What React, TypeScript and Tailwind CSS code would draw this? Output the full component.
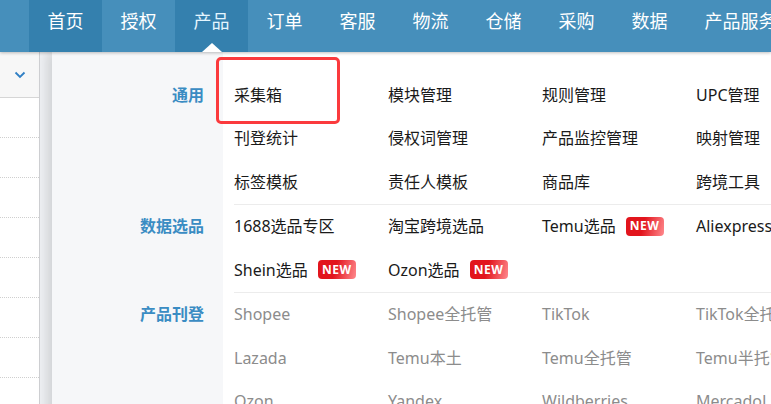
const NAV = ["首页", "授权", "产品", "订单", "客服", "物流", "仓储", "采购", "数据", "产品服务"];

type Item = { label: string; isNew?: boolean };

const SECTIONS: { title: string; muted?: boolean; rows: Item[][] }[] = [
  {
    title: "通用",
    rows: [
      [{ label: "采集箱" }, { label: "模块管理" }, { label: "规则管理" }, { label: "UPC管理" }],
      [{ label: "刊登统计" }, { label: "侵权词管理" }, { label: "产品监控管理" }, { label: "映射管理" }],
      [{ label: "标签模板" }, { label: "责任人模板" }, { label: "商品库" }, { label: "跨境工具" }],
    ],
  },
  {
    title: "数据选品",
    rows: [
      [
        { label: "1688选品专区" },
        { label: "淘宝跨境选品" },
        { label: "Temu选品", isNew: true },
        { label: "Aliexpress选品" },
      ],
      [{ label: "Shein选品", isNew: true }, { label: "Ozon选品", isNew: true }],
    ],
  },
  {
    title: "产品刊登",
    muted: true,
    rows: [
      [{ label: "Shopee" }, { label: "Shopee全托管" }, { label: "TikTok" }, { label: "TikTok全托管" }],
      [{ label: "Lazada" }, { label: "Temu本土" }, { label: "Temu全托管" }, { label: "Temu半托管" }],
      [{ label: "Ozon" }, { label: "Yandex" }, { label: "Wildberries" }, { label: "MercadoLibre" }],
    ],
  },
];

function NewBadge() {
  return (
    <span className="ml-[10px] inline-flex h-[19px] w-[38px] items-center justify-center rounded-[4px] bg-[linear-gradient(105deg,#e2151d_45%,#ff8a8e_100%)] text-[12px] font-bold leading-none tracking-[0.5px] text-white">
      NEW
    </span>
  );
}

export default function App() {
  return (
    <div className="relative h-[404px] w-[771px] overflow-hidden bg-white font-['Noto_Sans','Noto_Sans_CJK_SC',sans-serif]">
      {/* top nav */}
      <div className="relative z-20 flex h-[52px] bg-[#468fbb] pl-[29px] shadow-[0_1px_3px_rgba(0,0,0,0.25)]">
        {NAV.map((n, i) => (
          <div
            key={n}
            className={`relative h-[52px] shrink-0 whitespace-nowrap px-[18.5px] pt-[11px] text-center text-[18px] leading-[20px] ${
              i === 0 || i === 2 ? "bg-[#3480ae]" : ""
            } ${i === 2 ? "text-[#e4f6ff]" : "text-white"}`}
          >
            {n}
            {i === 2 && (
              <span className="absolute bottom-0 left-[27px] h-0 w-0 border-x-[10px] border-b-[9px] border-x-transparent border-b-white" />
            )}
          </div>
        ))}
      </div>

      {/* page underneath */}
      <div className="flex h-[352px] bg-[#eef0f3]">
        <div className="w-[40px] shrink-0 border-r border-[#cfd0d3] bg-white">
          <div className="flex h-[46px] items-center justify-end border-b border-[#d6d6d6] bg-[#f7f7f7] pr-[13px]">
            <svg width="12" height="8" viewBox="0 0 12 8" fill="none">
              <path d="M1.5 1.5 6 6l4.5-4.5" stroke="#2f7fc4" strokeWidth="1.8" />
            </svg>
          </div>
          {[0, 1, 2, 3, 4, 5, 6].map((r) => (
            <div key={r} className="h-[40px] border-b border-dotted border-[#cfcfcf]" />
          ))}
        </div>
      </div>

      {/* dropdown */}
      <div className="absolute left-[52px] top-[52px] z-10 w-[760px] bg-white pt-[21px] shadow-[-5px_0_10px_rgba(0,0,0,0.12)] before:absolute before:left-0 before:top-0 before:h-[21px] before:w-[171px] before:bg-[#f6f7f9]">
        {SECTIONS.map((s, si) => (
          <div key={s.title} className="flex">
            <div className="flex w-[171px] shrink-0 justify-end bg-[#f6f7f9] pr-[19px]">
              <div className="flex h-[43.5px] items-center text-[16px] font-bold text-[#3a8cc3]">
                {s.title}
              </div>
            </div>
            <div className="flex-1 pl-[11px]">
              <div className={si < SECTIONS.length - 1 ? "border-b border-[#ececec]" : ""}>
                {s.rows.map((row, ri) => (
                  <div key={ri} className="flex h-[43.5px] items-center">
                    {row.map((it) => (
                      <div
                        key={it.label}
                        className={`flex w-[154px] shrink-0 items-center whitespace-nowrap text-[16px] ${
                          s.muted ? "text-[#8c8c8c]" : "text-[#1a1a1a]"
                        }`}
                      >
                        {it.label}
                        {it.isNew && <NewBadge />}
                      </div>
                    ))}
                  </div>
                ))}
              </div>
            </div>
          </div>
        ))}
      </div>

      {/* highlight annotation */}
      <div className="absolute left-[216px] top-[57px] z-30 h-[67px] w-[124px] rounded-[5px] border-[3px] border-[#fb3a3d]" />
    </div>
  );
}
